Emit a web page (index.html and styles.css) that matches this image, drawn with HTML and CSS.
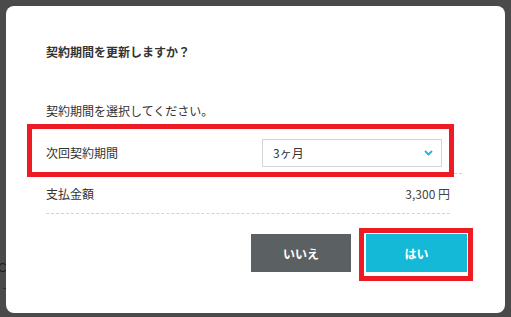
FILE: index.html
```html
<!DOCTYPE html>
<html lang="ja">
<head>
<meta charset="utf-8">
<link rel="stylesheet" href="styles.css">
</head>
<body>
<span class="bg-glyph">C</span>
<span class="bg-dash"></span>
<div class="modal">
  <p class="title">契約期間を更新しますか？</p>
  <p class="desc">契約期間を選択してください。</p>
  <div class="row row-period">
    <span class="label">次回契約期間</span>
    <div class="select">
      <span class="select-value">3ヶ月</span>
      <svg class="chevron" width="9" height="6" viewBox="0 0 9 6"><path d="M1 1 L4.5 4.5 L8 1" fill="none" stroke="#1bb6da" stroke-width="1.8"/></svg>
    </div>
  </div>
  <div class="row row-amount">
    <span class="label">支払金額</span>
    <span class="amount">3,300 円</span>
  </div>
  <div class="actions">
    <button class="btn btn-no">いいえ</button>
    <button class="btn btn-yes">はい</button>
  </div>
  <span class="mark mark-row"></span>
  <span class="mark mark-btn"></span>
</div>
</body>
</html>
```
FILE: styles.css
```css
html, body {
  margin: 0;
  padding: 0;
}
body {
  background: #4a4a4a;
  width: 511px;
  height: 317px;
  overflow: hidden;
  position: relative;
  font-family: "Noto Sans CJK JP", "Noto Sans", sans-serif;
  color: #333;
  font-size: 12px;
}
.bg-glyph {
  position: absolute;
  left: -2px;
  top: 260px;
  font-family: "Liberation Sans", sans-serif;
  font-size: 12px;
  color: #1e1e1e;
  line-height: 16px;
}
.bg-dash {
  position: absolute;
  left: 3px;
  top: 288px;
  width: 3px;
  height: 1px;
  background: #2e2e2e;
}
.modal {
  position: relative;
  margin: 6px 0 0 6px;
  width: 499px;
  height: 307px;
  box-sizing: border-box;
  padding: 37px 38px 0 40px;
  background: #fff;
  border-radius: 8px;
}
.title {
  margin: 0;
  font-weight: bold;
  font-size: 12px;
  line-height: 18px;
  color: #333;
}
.desc {
  margin: 41px 0 0;
  font-size: 12px;
  line-height: 18px;
  color: #333;
}
.row {
  display: flex;
  align-items: center;
  border-bottom: 1px dashed #d2d2d2;
  line-height: 18px;
}
.row-period {
  margin-top: 19px;
  width: 416px;
  padding-bottom: 6px;
}
.row-amount {
  width: 404px;
  padding: 11px 0 10px;
}
.label {
  flex: 1;
}
.select {
  width: 180px;
  height: 28px;
  box-sizing: border-box;
  margin-right: 20px;
  border: 1px solid #d5d5d5;
  display: flex;
  align-items: center;
  padding: 0 8px 0 10px;
}
.select-value {
  flex: 1;
  color: #333;
}
.chevron {
  display: block;
}
.amount {
  color: #444;
}
.actions {
  display: flex;
  justify-content: flex-end;
  gap: 15px;
  margin-top: 20px;
}
.btn {
  border: none;
  height: 38px;
  font-family: "Noto Sans CJK JP", "Noto Sans", sans-serif;
  font-size: 12px;
  font-weight: bold;
  color: #fff;
  padding: 0;
}
.btn-no {
  width: 100px;
  background: #5b6163;
}
.btn-yes {
  width: 101px;
  background: #14b9d8;
}
.mark {
  position: absolute;
  border: 5px solid #ed1c24;
  box-sizing: border-box;
}
.mark-row {
  left: 21px;
  top: 118px;
  width: 427px;
  height: 53px;
}
.mark-btn {
  left: 353px;
  top: 222px;
  width: 114px;
  height: 53px;
}
```
